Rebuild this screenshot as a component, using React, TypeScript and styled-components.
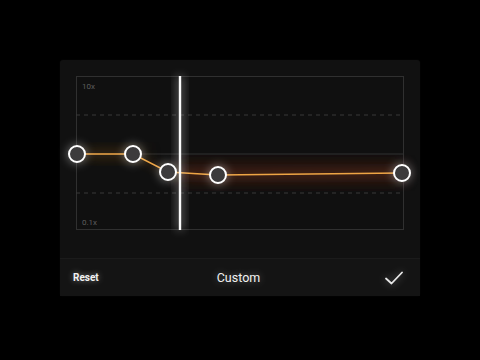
import * as React from "react";
import styled, { createGlobalStyle } from "styled-components";

const Global = createGlobalStyle`
    html, body {
        margin: 0;
        padding: 0;
        background: #000;
    }
    body {
        font-family: Roboto, "Liberation Sans", sans-serif;
    }
`

const Screen = styled.div`
    width: 480px;
    height: 360px;
    background: #000;
    display: flex;
    align-items: flex-start;
    justify-content: center;
    padding-top: 60px;
    box-sizing: border-box;
`

const Panel = styled.div`
    width: 360px;
    height: 236px;
    background: #111;
    border-radius: 3px;
    display: flex;
    flex-direction: column;
    box-shadow: 0 0 2px rgba(255, 255, 255, 0.04);
`

const ChartArea = styled.div`
    padding: 16px 15px 0 16px;
    height: 198px;
    box-sizing: border-box;
`

const Bar = styled.div`
    flex: 1;
    background: #141414;
    border-top: 1px solid #1b1b1b;
    display: grid;
    grid-template-columns: 1fr auto 1fr;
    align-items: center;
    padding: 0 16px 0 13px;
    color: #f2f2f2;
`

const Reset = styled.span`
    font-size: 10px;
    font-weight: 700;
    text-shadow: 0 0 6px rgba(255, 255, 255, 0.45);
`

const Title = styled.span`
    font-size: 12.5px;
    text-shadow: 0 0 8px rgba(255, 255, 255, 0.4);
`

const Check = styled.svg`
    justify-self: end;
    width: 20px;
    height: 16px;
    filter: drop-shadow(0 0 4px rgba(255, 255, 255, 0.4));
`

const points: [number, number][] = [
    [1, 78],
    [57, 78],
    [92, 96],
    [142, 99],
    [326, 97],
]

const Chart = () => (
    <svg width={328} height={154} style={{ overflow: "visible", display: "block" }}>
        <defs>
            <filter id="glow" x="-100%" y="-100%" width="300%" height="300%">
                <feGaussianBlur stdDeviation="5" />
            </filter>
            <filter id="soft" x="-50%" y="-50%" width="200%" height="200%">
                <feGaussianBlur stdDeviation="8" />
            </filter>
        </defs>
        <rect x={0.5} y={0.5} width={327} height={153} fill="#101010" stroke="#303030" />
        <line x1={0} x2={328} y1={39} y2={39} stroke="#383838" strokeDasharray="4 4" />
        <line x1={0} x2={328} y1={78} y2={78} stroke="#303030" />
        <line x1={0} x2={328} y1={117} y2={117} stroke="#383838" strokeDasharray="4 4" />
        <text x={6} y={13} fill="#5e5e5e" fontSize={8} fontFamily="Roboto, sans-serif">10x</text>
        <text x={6} y={149} fill="#5e5e5e" fontSize={8} fontFamily="Roboto, sans-serif">0.1x</text>
        <rect x={104} y={88} width={222} height={18} fill="#5a1e0c" opacity={0.5} filter="url(#soft)" />
        <rect x={10} y={72} width={60} height={12} fill="#4a2e10" opacity={0.35} filter="url(#soft)" />
        <polyline
            points={points.map(p => p.join(",")).join(" ")}
            fill="none"
            stroke="#e89a3a"
            strokeWidth={3}
            opacity={0.3}
            filter="url(#glow)"
        />
        <polyline
            points={points.map(p => p.join(",")).join(" ")}
            fill="none"
            stroke="#eea545"
            strokeWidth={1.5}
        />
        <rect x={101} y={0} width={6} height={154} fill="#fff" opacity={0.35} filter="url(#glow)" />
        <line x1={104} x2={104} y1={0} y2={154} stroke="#fafafa" strokeWidth={2.4} />
        {points.map(([x, y], i) => (
            <g key={i}>
                <circle cx={x} cy={y} r={10} fill="#fff" opacity={0.35} filter="url(#glow)" />
                <circle cx={x} cy={y} r={8} fill="#3c3b3c" stroke="#fff" strokeWidth={2} />
            </g>
        ))}
    </svg>
)

const App = () => {
    return (
        <Screen>
            <Global />
            <Panel>
                <ChartArea>
                    <Chart />
                </ChartArea>
                <Bar>
                    <Reset>Reset</Reset>
                    <Title>Custom</Title>
                    <Check viewBox="0 0 20 16">
                        <path d="M2 8.5 L7.5 13.5 L18 2.5" fill="none" stroke="#e8e8e8" strokeWidth={1.8} strokeLinecap="round" strokeLinejoin="round" />
                    </Check>
                </Bar>
            </Panel>
        </Screen>
    )
}

export default App
